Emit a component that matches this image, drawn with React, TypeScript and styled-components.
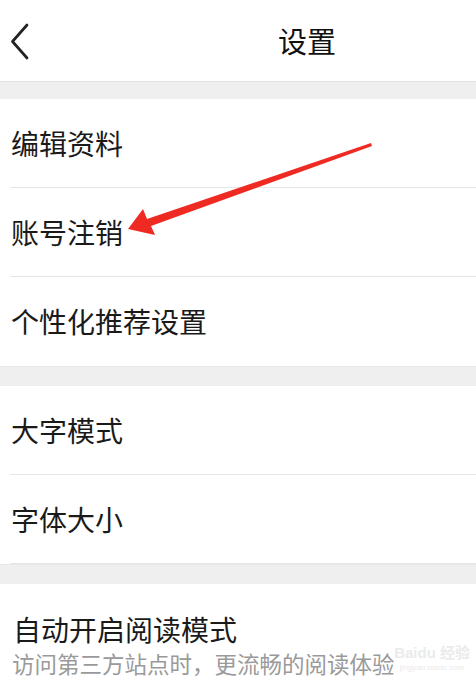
import React from "react";
import styled, { createGlobalStyle } from "styled-components";

const GlobalStyle = createGlobalStyle`
  html, body {
    margin: 0;
    padding: 0;
    background: #ffffff;
  }
  body {
    font-family: "Noto Sans CJK SC", "Noto Sans", sans-serif;
    color: #1a1a1a;
  }
`;

type RowItem = { label: string };

const groups: RowItem[][] = [
  [{ label: "编辑资料" }, { label: "账号注销" }, { label: "个性化推荐设置" }],
  [{ label: "大字模式" }, { label: "字体大小" }],
];

export default function App() {
  return (
    <>
      <GlobalStyle />
      <StyledPage>
        <StyledHeader>
          <StyledBack aria-label="back">
            <svg width="20" height="40" viewBox="0 0 20 40">
              <path d="M17 3 L2.5 19.5 L17 36" fill="none" stroke="#222" strokeWidth="2.7" strokeLinecap="round" strokeLinejoin="round" />
            </svg>
          </StyledBack>
          <StyledTitle>设置</StyledTitle>
        </StyledHeader>

        {groups.map((group, gi) => (
          <React.Fragment key={gi}>
            <StyledGap first={gi === 0} />
            <StyledSection>
              {group.map((item, i) => (
                <StyledRow key={item.label} divider={i < group.length - 1 || gi === 1}>
                  <StyledLabel>{item.label}</StyledLabel>
                </StyledRow>
              ))}
            </StyledSection>
          </React.Fragment>
        ))}

        <StyledGap />
        <StyledSection>
          <StyledTwoLineRow>
            <StyledLabel>自动开启阅读模式</StyledLabel>
            <StyledHint>访问第三方站点时，更流畅的阅读体验</StyledHint>
          </StyledTwoLineRow>
        </StyledSection>

        <StyledArrow width="476" height="697" viewBox="0 0 476 697">
          <polygon
            points="128,229 143,209 147,219 371,143 372,146 151,226 155,235"
            fill="#ef2a22"
          />
        </StyledArrow>

        <StyledWatermark>
          <span>Baidu 经验</span>
          <small>jingyan.baidu.com</small>
        </StyledWatermark>
      </StyledPage>
    </>
  );
}

const StyledPage = styled.div`
  position: relative;
  width: 476px;
  height: 697px;
  overflow: hidden;
  background: #ffffff;
`;

const StyledHeader = styled.div`
  height: 81px;
  display: flex;
  align-items: center;
  padding-left: 10px;
  box-sizing: border-box;
`;

const StyledBack = styled.div`
  width: 20px;
  height: 40px;
  display: flex;
  margin-top: 2px;
`;

const StyledTitle = styled.div`
  margin-left: auto;
  margin-right: 140px;
  font-size: 29px;
  line-height: 1;
  color: #111;
`;

const StyledGap = styled.div<{ first?: boolean }>`
  height: ${(p) => (p.first ? 18 : 20)}px;
  background: #efefef;
  border-top: 1px solid ${(p) => (p.first ? "#e2e2e2" : "#e9e9e9")};
  box-sizing: border-box;
`;

const StyledSection = styled.div`
  background: #ffffff;
`;

const StyledRow = styled.div<{ divider?: boolean }>`
  height: 89px;
  display: flex;
  align-items: center;
  margin-left: 10px;
  box-sizing: border-box;
  border-bottom: 1px solid ${(p) => (p.divider ? "#e6e6e6" : "transparent")};
`;

const StyledLabel = styled.div`
  font-size: 28px;
  line-height: 1;
  color: #1a1a1a;
  padding-left: 1px;
`;

const StyledTwoLineRow = styled.div`
  display: flex;
  flex-direction: column;
  gap: 9px;
  padding: 31px 0 0 12px;
`;

const StyledHint = styled.div`
  font-size: 22.5px;
  line-height: 1;
  color: #9a9a9a;
`;

const StyledArrow = styled.svg`
  position: absolute;
  left: 0;
  top: 0;
  pointer-events: none;
`;

const StyledWatermark = styled.div`
  position: absolute;
  right: 6px;
  top: 645px;
  display: flex;
  flex-direction: column;
  align-items: center;
  gap: 4px;
  white-space: nowrap;
  color: #ebebeb;
  font-family: "Liberation Sans", "Noto Sans CJK SC", sans-serif;
  span {
    font-size: 15px;
    font-weight: bold;
    line-height: 1;
  }
  small {
    font-size: 8px;
    line-height: 1;
  }
`;
